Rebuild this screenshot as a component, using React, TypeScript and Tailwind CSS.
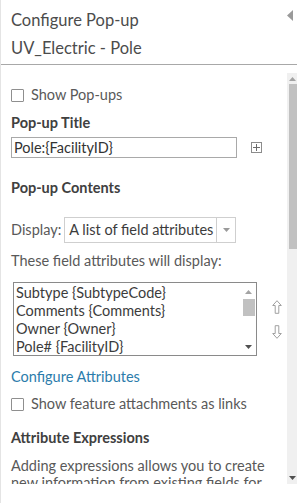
import React from "react";

function Checkbox() {
  return <span className="inline-block w-[13px] h-[13px] border border-[#8f8f8f] bg-white rounded-[1px] shrink-0" />;
}

export default function App() {
  return (
    <div
      className="w-[297px] h-[503px] bg-white relative overflow-hidden border-l border-[#e4e4e4] text-[#4c4c4c]"
      style={{ fontFamily: "Lato, 'Open Sans', sans-serif" }}
    >
      {/* header */}
      <div className="relative pl-[10px] pt-[9px] h-[65px] border-b border-[#a8a8a8]">
        <div className="text-[16.5px] leading-[22px] text-[#4c4c4c]">Configure Pop-up</div>
        <div className="text-[16.5px] leading-[22px] mt-[6px] text-[#4c4c4c]">UV_Electric - Pole</div>
        <svg className="absolute right-[4px] top-[10px]" width="6" height="11" viewBox="0 0 6 11">
          <path d="M6 0 L0 5.5 L6 11 Z" fill="#9a9a9a" />
        </svg>
      </div>

      {/* body */}
      <div className="flex mt-[8px] h-[411px]">
        <div className="flex-1 overflow-hidden pl-[10px] pt-[15px] text-[14.5px]">
          <label className="flex items-center gap-[7px] h-[14px]">
            <Checkbox />
            <span className="text-[#595959] leading-[18px]">Show Pop-ups</span>
          </label>

          <div className="mt-[12px] font-bold text-[#404040] leading-[18px]">Pop-up Title</div>

          <div className="flex items-center mt-[5px]">
            <div className="w-[226px] h-[21px] border border-[#a9a9a9] flex items-center pl-[2px] text-[#333] leading-[18px]">
              Pole:{"{FacilityID}"}
            </div>
            <div className="ml-[14px] w-[11px] h-[11px] border border-[#8c8c8c] relative">
              <span className="absolute left-[4px] top-[1px] w-[1px] h-[7px] bg-[#6c6c6c]" />
              <span className="absolute left-[1px] top-[4px] w-[7px] h-[1px] bg-[#6c6c6c]" />
            </div>
          </div>

          <div className="mt-[21px] font-bold text-[#404040] leading-[18px]">Pop-up Contents</div>

          <div className="flex items-center mt-[20px]">
            <span className="text-[#595959] leading-[18px]">Display:</span>
            <div className="ml-[3px] w-[172px] h-[26px] border border-[#cfcfcf] flex items-center">
              <span className="flex-1 pl-[4px] text-[#3c3c3c] whitespace-nowrap leading-[18px]">A list of field attributes</span>
              <span className="w-[19px] h-full border-l border-[#cfcfcf] flex items-center justify-center">
                <svg width="7" height="4" viewBox="0 0 7 4"><path d="M0 0 H7 L3.5 4 Z" fill="#9a9a9a" /></svg>
              </span>
            </div>
          </div>

          <div className="mt-[9px] text-[#595959] leading-[18px]">These field attributes will display:</div>

          <div className="flex items-center mt-[12px]">
            <div className="ml-[2px] w-[244px] h-[74px] border border-[#8a8a8a] flex">
              <div className="flex-1 pl-[2px] text-[#3c3c3c] leading-[18px] pt-[1px] whitespace-nowrap overflow-hidden">
                <div>Subtype {"{SubtypeCode}"}</div>
                <div>Comments {"{Comments}"}</div>
                <div>Owner {"{Owner}"}</div>
                <div>Pole# {"{FacilityID}"}</div>
              </div>
              <div className="w-[15px] flex flex-col items-center bg-white">
                <svg className="mt-[7px]" width="7" height="4" viewBox="0 0 7 4"><path d="M3.5 0 L7 4 H0 Z" fill="#a3a3a3" /></svg>
                <div className="mt-[5px] w-[12px] h-[17px] bg-[#c1c1c1]" />
                <div className="flex-1" />
                <svg className="mb-[6px]" width="7" height="4" viewBox="0 0 7 4"><path d="M0 0 H7 L3.5 4 Z" fill="#505050" /></svg>
              </div>
            </div>
            <div className="ml-[15px] flex flex-col items-center gap-[11px]">
              <svg width="10" height="14" viewBox="0 0 10 14">
                <path d="M5 0.7 L9.3 5.5 H6.8 V13.3 H3.2 V5.5 H0.7 Z" fill="white" stroke="#a0a0a0" strokeWidth="1" />
              </svg>
              <svg width="10" height="14" viewBox="0 0 10 14">
                <path d="M5 13.3 L9.3 8.5 H6.8 V0.7 H3.2 V8.5 H0.7 Z" fill="white" stroke="#a0a0a0" strokeWidth="1" />
              </svg>
            </div>
          </div>

          <div className="mt-[12px] text-[#2b7cab] leading-[18px]">Configure Attributes</div>

          <label className="flex items-center gap-[7px] h-[14px] mt-[11px]">
            <Checkbox />
            <span className="text-[#595959] leading-[18px]">Show feature attachments as links</span>
          </label>

          <div className="mt-[18px] font-bold text-[#404040] leading-[18px]">Attribute Expressions</div>

          <div className="mt-[10px] text-[#595959] leading-[17px] pr-[4px]">
            Adding expressions allows you to create new information from existing fields for
            display in the pop-up.
          </div>
        </div>

        {/* scrollbar */}
        <div className="w-[10px] bg-[#f0f0f0] flex flex-col items-end">
          <svg className="mt-[4px] mr-[1px]" width="7" height="4" viewBox="0 0 7 4"><path d="M3.5 0 L7 4 H0 Z" fill="#a3a3a3" /></svg>
          <div className="mt-[3px] w-[8px] h-[165px] bg-[#c1c1c1]" />
          <div className="flex-1" />
          <svg className="mb-[4px] mr-[1px]" width="7" height="4" viewBox="0 0 7 4"><path d="M0 0 H7 L3.5 4 Z" fill="#505050" /></svg>
        </div>
      </div>
    </div>
  );
}
